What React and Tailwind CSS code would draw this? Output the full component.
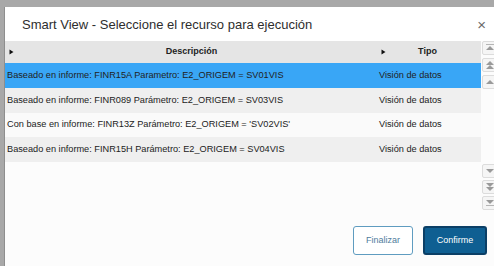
import React from "react";

const rows = [
  { d: "Baseado en informe: FINR15A Parametro: E2_ORIGEM = SV01VIS", bg: "bg-[#39a6f6]", h: "h-[25px]" },
  { d: "Baseado en informe: FINR089 Parámetro: E2_ORIGEM = SV03VIS", bg: "bg-[#efefef]", h: "h-[25px]" },
  { d: "Con base en informe: FINR13Z Parámetro: E2_ORIGEM = 'SV02VIS'", bg: "bg-[#fafafa]", h: "h-[24px]" },
  { d: "Baseado en informe: FINR15H Parámetro: E2_ORIGEM = SV04VIS", bg: "bg-[#efefef]", h: "h-[25px]" },
];

function Tri() {
  return (
    <svg width="5" height="6" viewBox="0 0 5 6" className="shrink-0">
      <path d="M0.5 0.5 L4.5 3 L0.5 5.5 Z" fill="#111" />
    </svg>
  );
}

function ScrollBtn({ kind, down }) {
  const t = (y) => (down ? `M3 ${y} L11 ${y} L7 ${y + 4} Z` : `M3 ${y + 4} L11 ${y + 4} L7 ${y} Z`);
  return (
    <div className="h-[14px] w-[16px] border border-[#dcdcdc] bg-[#f5f5f5] rounded-[2px] flex items-center justify-center">
      <svg width="14" height="12" viewBox="0 0 14 12">
        {kind === "single" && <path d={t(4)} fill="#9a9a9a" />}
        {kind === "double" && (
          <>
            <path d={t(2)} fill="#9a9a9a" />
            <path d={t(6)} fill="#9a9a9a" />
          </>
        )}
        {kind === "bar" && (
          <>
            <path d={t(down ? 3 : 4)} fill="#9a9a9a" />
            <rect x="3" y={down ? 8 : 2} width="8" height="1" fill="#b5b5b5" />
          </>
        )}
      </svg>
    </div>
  );
}

export default function App() {
  return (
    <div className="w-[494px] h-[266px] overflow-hidden bg-[#a8a8a8] pt-[7px] pl-[4px] font-['Liberation_Sans',Arial,sans-serif]">
      <div className="w-[510px] h-[270px] bg-[#fcfcfc] flex flex-col border-l border-[#8e8e8e]">
        <div className="h-[34px] flex items-center pl-[17px] pr-[28px] bg-white">
          <div className="text-[13px] text-[#2e2e2e] leading-none flex-1 pt-[1px]">
            Smart View - Seleccione el recurso para ejecución
          </div>
          <div className="text-[15px] text-[#6a6a6a] leading-none">×</div>
        </div>
        <div className="flex">
          <div className="w-[476px]">
            <div className="h-[22px] bg-[#e5e5e5] flex items-center text-[9px] font-bold text-[#222]">
              <div className="w-[372px] flex items-center pl-[4px]">
                <Tri />
                <div className="flex-1 text-center pr-[8px]">Descripción</div>
              </div>
              <div className="flex-1 flex items-center pl-[4px]">
                <Tri />
                <div className="flex-1 text-center pr-[12px]">Tipo</div>
              </div>
            </div>
            {rows.map((r, i) => (
              <div key={i} className={`${r.h} ${r.bg} flex items-center text-[9.2px] text-[#222]`}>
                <div className="w-[372px] pl-[2px] whitespace-nowrap">{r.d}</div>
                <div className="flex-1 pl-[2px]">Visión de datos</div>
              </div>
            ))}
          </div>
          <div className="ml-[1px] flex flex-col h-[170px] pt-0">
            <div className="flex flex-col gap-[3px]">
              <ScrollBtn kind="bar" />
              <ScrollBtn kind="double" />
              <ScrollBtn kind="single" />
            </div>
            <div className="flex-1" />
            <div className="flex flex-col gap-[2px] pb-[1px]">
              <ScrollBtn kind="single" down />
              <ScrollBtn kind="double" down />
              <ScrollBtn kind="bar" down />
            </div>
          </div>
        </div>
        <div className="flex justify-end gap-[10px] pr-[27px] mt-[15px]">
          <div className="w-[60px] h-[29px] rounded-[3px] border border-[#5f9cc0] bg-white flex items-center justify-center text-[9px] text-[#4f7c9c]">
            Finalizar
          </div>
          <div className="w-[64px] h-[29px] rounded-[3px] border-2 border-[#0b3f66] bg-[#0f5f92] flex items-center justify-center text-[9px] text-white">
            Confirme
          </div>
        </div>
      </div>
    </div>
  );
}
